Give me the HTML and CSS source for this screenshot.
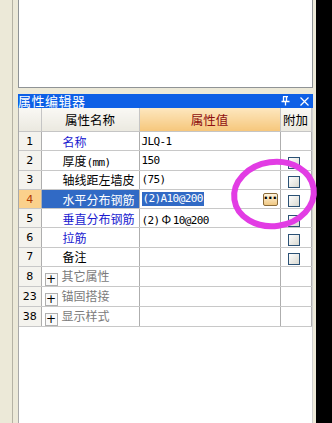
FILE: index.html
```html
<!DOCTYPE html>
<html lang="zh-CN">
<head>
    <meta charset="UTF-8">
    <title>属性编辑器</title>
    <link rel="stylesheet" href="styles.css">
</head>
<body>

    <div class="desk">
        <div class="frame">
            <div class="top-panel"></div>

            <div class="editor">
                <div class="title-bar">
                    <span class="title">属性编辑器</span>
                    <span class="title-icons">
                        <svg width="9" height="10" viewBox="0 0 9 10">
                            <path d="M2 0.5h5M2.5 0.5v5M5.5 0.5v5M0.5 5.5h8M4.5 5.5v4" stroke="#fff" stroke-width="1.3" fill="none"/>
                        </svg>
                        <svg width="9" height="9" viewBox="0 0 9 9">
                            <path d="M0.5 0.5l8 8M8.5 0.5l-8 8" stroke="#fff" stroke-width="1.2" fill="none"/>
                        </svg>
                    </span>
                </div>

                <table class="props">
                    <colgroup>
                        <col class="c-num">
                        <col class="c-name">
                        <col class="c-val">
                        <col class="c-add">
                    </colgroup>
                    <thead>
                        <tr>
                            <th class="h-num"></th>
                            <th class="h-name">属性名称</th>
                            <th class="h-val">属性值</th>
                            <th class="h-add">附加</th>
                        </tr>
                    </thead>
                    <tbody>
                        <tr>
                            <td class="num">1</td>
                            <td class="name blue">名称</td>
                            <td class="val">JLQ-1</td>
                            <td class="add"></td>
                        </tr>
                        <tr>
                            <td class="num">2</td>
                            <td class="name">厚度<span class="unit">(mm)</span></td>
                            <td class="val">150</td>
                            <td class="add"><span class="check"></span></td>
                        </tr>
                        <tr>
                            <td class="num">3</td>
                            <td class="name">轴线距左墙皮</td>
                            <td class="val">(75)</td>
                            <td class="add"><span class="check"></span></td>
                        </tr>
                        <tr class="current">
                            <td class="num">4</td>
                            <td class="name">水平分布钢筋</td>
                            <td class="val">
                                <div class="val-edit">
                                    <span class="selected-text">(2)A10@200</span>
                                    <span class="dots-btn">···</span>
                                </div>
                            </td>
                            <td class="add"><span class="check"></span></td>
                        </tr>
                        <tr>
                            <td class="num">5</td>
                            <td class="name blue">垂直分布钢筋</td>
                            <td class="val">(2)<span class="steel">Φ</span>10@200</td>
                            <td class="add"><span class="check"></span></td>
                        </tr>
                        <tr>
                            <td class="num">6</td>
                            <td class="name blue">拉筋</td>
                            <td class="val"></td>
                            <td class="add"><span class="check"></span></td>
                        </tr>
                        <tr>
                            <td class="num">7</td>
                            <td class="name">备注</td>
                            <td class="val"></td>
                            <td class="add"><span class="check"></span></td>
                        </tr>
                        <tr>
                            <td class="num">8</td>
                            <td class="name group"><span class="plus">+</span>其它属性</td>
                            <td class="val"></td>
                            <td class="add"></td>
                        </tr>
                        <tr>
                            <td class="num">23</td>
                            <td class="name group"><span class="plus">+</span>锚固搭接</td>
                            <td class="val"></td>
                            <td class="add"></td>
                        </tr>
                        <tr>
                            <td class="num">38</td>
                            <td class="name group"><span class="plus">+</span>显示样式</td>
                            <td class="val"></td>
                            <td class="add"></td>
                        </tr>
                    </tbody>
                </table>
            </div>
        </div>
    </div>

    <!-- hand-drawn marker circle over the edit button -->
    <svg class="marker" width="100" height="84" viewBox="0 0 100 84">
        <ellipse cx="48" cy="42" rx="40" ry="32" transform="rotate(-8 48 42)" fill="none" stroke="#e23ce4" stroke-width="6"/>
    </svg>

</body>
</html>
```

FILE: styles.css
```css
body {
    margin: 0;
    padding: 0;
    background-color: #000;
    font-family: "Noto Sans CJK SC", "Liberation Sans", sans-serif;
    font-size: 12px;
    color: #000;
    height: 423px;
    overflow: hidden;
    position: relative;
}

.desk {
    width: 304px;
    height: 423px;
    background-color: #ece9d8;
    padding-left: 12px;
}

.frame {
    height: 423px;
    border-left: 1px solid #b5b2a4;
    padding-left: 5px;
}

.top-panel {
    width: 293px;
    height: 87px;
    background-color: #fff;
    border: 1px solid #8f9396;
    border-top: none;
}

.editor {
    margin-top: 6px;
    width: 295px;
    height: 330px;
    background-color: #fff;
    border-left: 1px solid #a9a9a9;
    border-right: 1px solid #d0d0d0;
    box-sizing: border-box;
}

.title-bar {
    height: 14px;
    background-color: #0d5fe6;
    color: #fff;
    display: flex;
    align-items: center;
    justify-content: space-between;
    margin-left: -1px;
    margin-right: -1px;
}

.title {
    font-size: 13px;
    line-height: 14px;
    letter-spacing: 0.5px;
}

.title-icons {
    display: flex;
    align-items: center;
    gap: 10px;
    padding-right: 4px;
}

.props {
    border-collapse: collapse;
    table-layout: fixed;
    width: 292px;
}

.c-num { width: 22px; }
.c-name { width: 98px; }
.c-val { width: 141px; }
.c-add { width: 31px; }

.props th {
    height: 23px;
    font-weight: normal;
    font-size: 12.5px;
    border: 1px solid #c5c5c5;
    border-top: none;
    background: linear-gradient(#f9f8f4, #ebe9e0);
    padding: 0;
}

.props th.h-num {
    border-left: none;
}

.props th.h-val {
    background: linear-gradient(#fde7bf, #f6c77c);
    color: #8f1010;
}

.props td {
    height: 18.3px;
    padding: 0;
    border: 1px solid #c8c8c8;
    white-space: nowrap;
    overflow: hidden;
}

.props td.num {
    border-left: none;
    background-color: #f4f3ee;
    text-align: center;
    font-family: "DejaVu Sans", sans-serif;
    font-size: 11px;
    border-right-color: #aeaeae;
}

.props td.name {
    padding-left: 21px;
    border-right-color: #aeaeae;
}

.unit {
    font-family: "DejaVu Sans Mono", monospace;
    font-size: 11px;
    letter-spacing: -0.6px;
}

.props td.val {
    padding-left: 2px;
    font-family: "DejaVu Sans Mono", "Noto Sans CJK SC", monospace;
    font-size: 11px;
    letter-spacing: -0.6px;
    border-right-color: #aeaeae;
}

.steel {
    font-family: "Noto Sans CJK SC", sans-serif;
    font-size: 12px;
    padding: 0 2px;
}

.props td.add {
    text-align: center;
    border-right-color: #aeaeae;
}

.blue {
    color: #1a1ad0;
}

.props td.group {
    padding-left: 3px;
    color: #7b7b7b;
}

.plus {
    display: inline-block;
    width: 11px;
    height: 11px;
    line-height: 10px;
    text-align: center;
    border: 1px solid #b0b0b0;
    background-color: #fafafa;
    color: #000;
    font-family: "DejaVu Sans", sans-serif;
    font-size: 12px;
    margin-right: 4px;
    vertical-align: -2px;
}

.check {
    display: inline-block;
    width: 10px;
    height: 10px;
    border: 1px solid #2b5175;
    background: linear-gradient(135deg, #fff, #d8d8d0);
    vertical-align: middle;
    margin-right: 4px;
}

.current td.num {
    background-color: #fbd18c;
    color: #b23a00;
}

.current td.name {
    background-color: #316ac5;
    color: #fff;
}

.val-edit {
    display: flex;
    align-items: center;
    justify-content: space-between;
    padding-right: 2px;
}

.selected-text {
    background-color: #316ac5;
    color: #fff;
    line-height: 14px;
    padding: 0 1px;
}

.dots-btn {
    width: 13px;
    height: 11px;
    line-height: 9px;
    font-size: 12px;
    font-weight: bold;
    letter-spacing: 0;
    text-align: center;
    border: 1px solid #8a6b3a;
    border-radius: 2px;
    background: linear-gradient(#fff5e0, #f0c882);
    color: #000;
    font-family: "DejaVu Sans", sans-serif;
}

.marker {
    position: absolute;
    left: 226px;
    top: 152px;
}
```
